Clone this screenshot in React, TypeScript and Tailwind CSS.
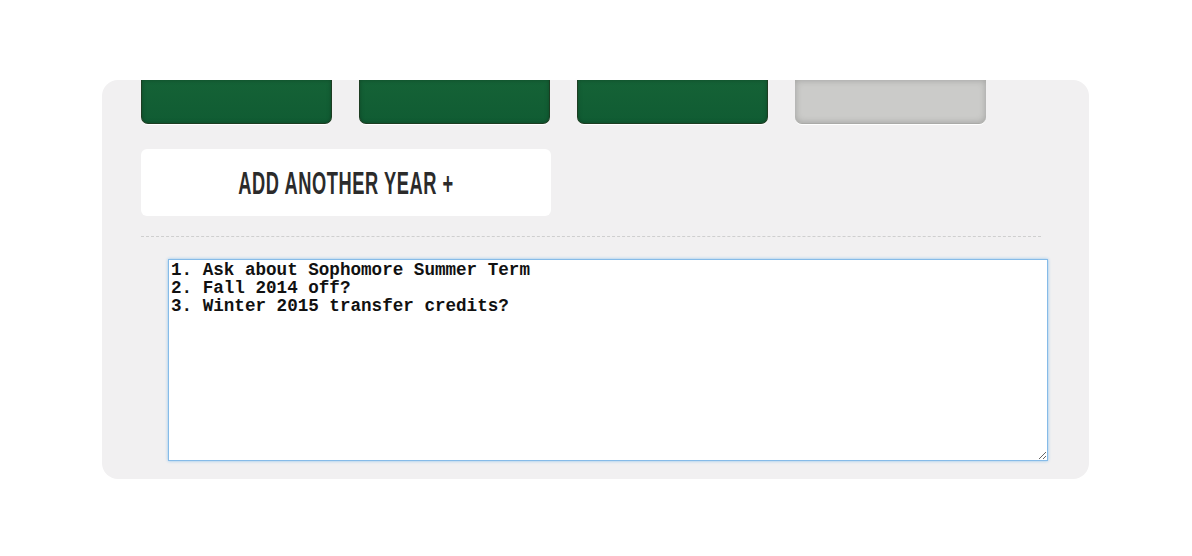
import React from 'react';

const tiles = ['green', 'green', 'green', 'gray'];

export default function App() {
  return (
    <div className="w-[1192px] h-[556px] bg-white pt-[80px] pl-[102px]">
      <section className="w-[987px] h-[399px] rounded-[16px] bg-[#f1f0f1] pl-[39px] pr-[41px] overflow-hidden">
        <div className="flex gap-[27px]">
          {tiles.map((t, i) =>
            t === 'green' ? (
              <div
                key={i}
                className="w-[191px] h-[44px] rounded-b-[7px] bg-gradient-to-b from-[#156236] to-[#105c33] border border-t-0 border-[#1d3d22] shadow-[0_1px_0_#ffffff,inset_0_0_4px_rgba(0,0,0,0.25)]"
              />
            ) : (
              <div
                key={i}
                className="w-[191px] h-[44px] rounded-b-[7px] bg-[#cbcbc9] border-b border-[#aaaaa8] shadow-[0_1px_0_#ffffff,inset_0_0_7px_rgba(0,0,0,0.22)]"
              />
            )
          )}
        </div>

        <button className="mt-[25px] w-[410px] h-[67px] rounded-[6px] bg-white flex items-center justify-center">
          <span
            className="inline-block scale-x-[0.57] text-[32px] font-bold text-[#2b2b2b] tracking-[1px] whitespace-nowrap"
            style={{ fontFamily: '"Liberation Sans Narrow", "Liberation Sans", sans-serif' }}
          >
            ADD ANOTHER YEAR +
          </span>
        </button>

        <div className="mt-[20px] w-[900px] border-t border-dashed border-[#cfcfcf]" />

        <div className="mt-[22px] pl-[27px]">
          <textarea
            readOnly
            defaultValue={'1. Ask about Sophomore Summer Term\n2. Fall 2014 off?\n3. Winter 2015 transfer credits?'}
            className="block w-[880px] h-[202px] bg-white border border-[#86bbe8] shadow-[0_0_3px_#8fc2ec] outline-none px-[2px] pt-[1px] text-[17.6px] leading-[18px] font-bold text-[#111]"
            style={{ fontFamily: '"Liberation Mono", "Courier New", monospace' }}
          />
        </div>
      </section>
    </div>
  );
}
